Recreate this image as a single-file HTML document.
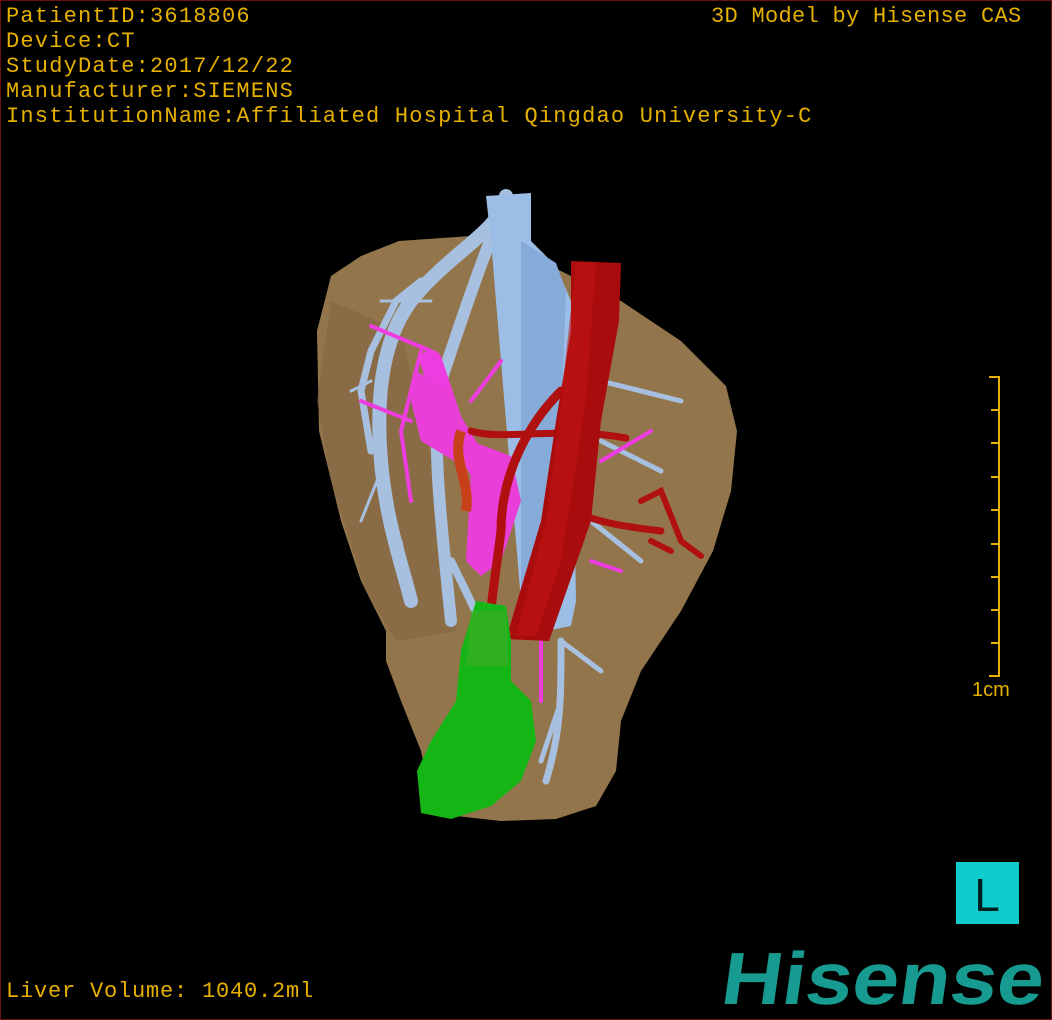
<!DOCTYPE html>
<html><head><meta charset="utf-8"><style>
html,body{margin:0;padding:0;background:#000;}
#c{position:relative;width:1050px;height:1018px;border:1px solid #6b1010;overflow:hidden;background:#000;}
.t{position:absolute;font-family:"Liberation Mono",monospace;font-size:22px;color:#e6b000;letter-spacing:1.2px;white-space:pre;line-height:25px;}
</style></head><body><div id="c">
<div class="t" style="left:5px;top:3px;">PatientID:3618806
Device:CT
StudyDate:2017/12/22
Manufacturer:SIEMENS
InstitutionName:Affiliated Hospital Qingdao University-C</div>
<div class="t" style="left:710px;top:3px;letter-spacing:0.3px;">3D Model by Hisense CAS</div>
<div class="t" style="left:5px;top:978px;letter-spacing:0.8px;">Liver Volume: 1040.2ml</div>
<div class="t" style="left:971px;top:677px;font-family:'Liberation Sans',sans-serif;font-size:20px;letter-spacing:0;">1cm</div>
<svg width="1050" height="1018" style="position:absolute;left:0;top:0" viewBox="0 0 1050 1018">
<g stroke="#e6b000" stroke-width="2">
<line x1="998" y1="375" x2="998" y2="676"/>
<line x1="988" y1="376" x2="998" y2="376"/><line x1="990" y1="409" x2="998" y2="409"/><line x1="990" y1="442" x2="998" y2="442"/><line x1="990" y1="476" x2="998" y2="476"/><line x1="990" y1="509" x2="998" y2="509"/><line x1="990" y1="543" x2="998" y2="543"/><line x1="990" y1="576" x2="998" y2="576"/><line x1="990" y1="609" x2="998" y2="609"/><line x1="990" y1="642" x2="998" y2="642"/><line x1="988" y1="675" x2="998" y2="675"/>
</g>
<path d="M398,240 L470,235 L500,245 L560,270 L620,300 L680,340 L725,385 L736,430 L730,490 L712,550 L680,610 L640,670 L620,720 L615,770 L595,805 L555,818 L500,820 L455,815 L430,795 L420,750 L400,700 L385,660 L385,630 L360,580 L340,520 L318,430 L316,330 L330,275 L360,255 Z" fill="#93754c"/>
<path d="M330,300 L316,400 L330,480 L365,590 L395,640 L455,630 L440,500 L400,330 Z" fill="#806240" opacity="0.5"/>
<g fill="none" stroke="#a7c0e0" stroke-linecap="round">
<path d="M505,195 C500,230 450,250 410,300 C380,340 375,400 380,460 C385,520 400,560 410,600" stroke-width="14"/>
<path d="M505,200 C480,260 460,320 440,380 C430,440 440,520 450,620" stroke-width="12"/>
<path d="M420,280 L395,300 L370,350 L360,390 L370,450" stroke-width="7"/>
<path d="M450,560 C470,600 490,640 500,680" stroke-width="8"/>
<path d="M560,640 C560,700 560,730 545,780" stroke-width="7"/>
<path d="M560,640 L600,670 M560,700 L540,760 M600,380 L680,400 M600,440 L660,470 M590,520 L640,560" stroke-width="5"/>
<path d="M380,300 L430,300 M370,380 L350,390 M380,470 L360,520 M400,540 L410,600" stroke-width="3"/>
</g>
<path d="M485,195 L530,192 L530,240 L555,265 L570,300 L575,600 L570,625 L545,630 L520,600 L505,420 L495,300 L490,240 Z" fill="#9bbde6"/>
<path d="M520,240 L555,262 L565,290 L555,560 L540,620 L520,600 Z" fill="#86abd8"/>
<g fill="none" stroke="#ee3ce0" stroke-linecap="round">
<path d="M430,360 L450,420 L480,470 L490,520 L480,560" stroke-width="22"/>
<path d="M370,325 L430,350 M420,350 L400,430 L410,500 M360,400 L410,420 M470,400 L500,360 M600,460 L650,430 M590,560 L620,570 M540,640 L540,700" stroke-width="4"/>
</g>
<path d="M415,370 L450,390 L470,440 L510,455 L520,500 L500,560 L480,575 L465,560 L470,470 L420,440 L410,400 Z" fill="#e93fd8"/>
<g fill="none" stroke="#b01010" stroke-linecap="round">
<path d="M560,390 C530,420 500,470 500,530 C495,570 490,600 488,630" stroke-width="9"/>
<path d="M470,430 C500,440 560,425 625,437" stroke-width="7"/>
<path d="M560,500 C580,520 620,525 660,530" stroke-width="7"/>
<path d="M640,500 L660,490 L680,540 L700,555 M650,540 L670,550" stroke-width="6"/>
</g>
<path d="M460,430 C450,460 470,480 465,510" stroke="#c8401a" stroke-width="10" fill="none"/>
<path d="M570,260 L620,262 L618,320 L600,420 L590,520 L548,640 L505,638 L540,520 L555,420 L570,330 Z" fill="#a80c0c"/>
<path d="M575,262 L595,262 L585,400 L560,560 L535,635 L515,635 L545,520 L560,400 Z" fill="#c01414" opacity="0.6"/>
<path d="M475,600 L505,605 L510,640 L510,680 L530,700 L535,740 L520,780 L490,805 L450,818 L420,812 L416,770 L430,740 L455,700 L460,650 Z" fill="#15b515"/>
<path d="M470,610 L505,610 L508,665 L465,665 Z" fill="#3fad2a" opacity="0.6"/>
<rect x="955" y="861" width="63" height="62" fill="#10cccc"/>
<text x="986" y="910" font-family="Liberation Sans,sans-serif" font-size="46" fill="#002020" text-anchor="middle">L</text>
<g transform="translate(722,1003) skewX(-8)">
<text x="-4" y="0" font-family="Liberation Sans,sans-serif" font-weight="bold" font-size="74" fill="#179a8f" textLength="322" lengthAdjust="spacingAndGlyphs">Hisense</text>
</g>
</svg>
</div></body></html>
